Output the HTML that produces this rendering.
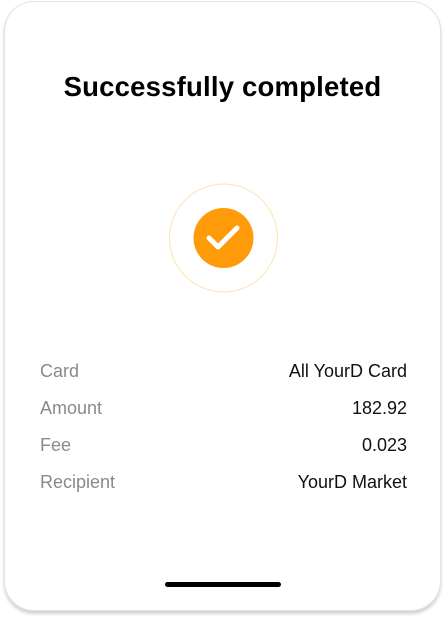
<!DOCTYPE html>
<html><head><style>
html,body{margin:0;padding:0;width:445px;height:618px;background:#fff;overflow:hidden;font-family:"Liberation Sans",sans-serif}
.card{position:absolute;left:4px;top:1px;width:435px;height:608px;border:1px solid #e2e2e2;border-radius:30px;box-shadow:0 3px 3px rgba(0,0,0,0.18);background:#fff}
h1{position:absolute;left:0;width:445px;top:71px;margin:0;text-align:center;font-size:27.5px;font-weight:bold;color:#000;letter-spacing:0.2px}
.row{position:absolute;left:40px;width:367px;font-size:18px;display:flex;justify-content:space-between}
.row span:first-child{color:#8a8a8a}
.row span:last-child{color:#111}
.bar{position:absolute;left:165px;top:582px;width:116px;height:5px;border-radius:3px;background:#000}
</style></head><body>
<div class="card"></div>
<h1>Successfully completed</h1>
<svg style="position:absolute;left:0;top:0" width="445" height="618">
<circle cx="223.5" cy="238" r="54" fill="#fff" stroke="#fde3a8" stroke-width="1"/>
<circle cx="223.5" cy="238" r="30" fill="#ff9a08"/>
<path d="M209 238 L218 247 L237 228" fill="none" stroke="#fff" stroke-width="5" stroke-linecap="round" stroke-linejoin="round"/>
</svg>
<div class="row" style="top:361px"><span>Card</span><span>All YourD Card</span></div>
<div class="row" style="top:398px"><span>Amount</span><span>182.92</span></div>
<div class="row" style="top:435px"><span>Fee</span><span>0.023</span></div>
<div class="row" style="top:472px"><span>Recipient</span><span>YourD Market</span></div>
<div class="bar"></div>
</body></html>
